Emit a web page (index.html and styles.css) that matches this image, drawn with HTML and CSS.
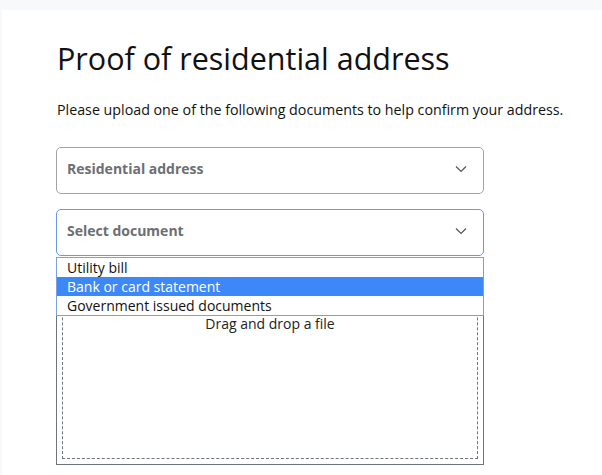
FILE: index.html
```html
<!DOCTYPE html>
<html>
<head>
<meta charset="utf-8">
<link rel="stylesheet" href="styles.css">
</head>
<body>
<div class="topbar"></div>
<main class="panel">
  <h1 class="title">Proof of residential address</h1>
  <p class="intro">Please upload one of the following documents to help confirm your address.</p>
  <div class="select">
    <span class="select-label">Residential address</span>
    <svg class="chev" width="12" height="8" viewBox="0 0 12 8"><path d="M1 1.5 L6 6.5 L11 1.5" fill="none" stroke="#555" stroke-width="1.2"/></svg>
  </div>
  <div class="select select-focus">
    <span class="select-label">Select document</span>
    <svg class="chev" width="12" height="8" viewBox="0 0 12 8"><path d="M1 1.5 L6 6.5 L11 1.5" fill="none" stroke="#555" stroke-width="1.2"/></svg>
  </div>
  <div class="drop-wrap">
    <ul class="options">
      <li class="option">Utility bill</li>
      <li class="option option-active">Bank or card statement</li>
      <li class="option">Government issued documents</li>
    </ul>
    <div class="dropzone">
      <div class="dropzone-inner">Drag and drop a file</div>
    </div>
  </div>
</main>
</body>
</html>
```
FILE: styles.css
```css
html, body {
  margin: 0;
  padding: 0;
  background: #f8f9fa;
  font-family: "Open Sans", "Noto Sans", sans-serif;
  color: #111;
}
.topbar {
  height: 10px;
}
.panel {
  margin-left: 2px;
  background: #fff;
  min-height: 465px;
  padding: 26px 0 0 54px;
  box-sizing: border-box;
}
.title {
  margin: 0;
  padding-left: 1px;
  font-weight: 400;
  font-size: 30.5px;
  line-height: 44px;
}
.intro {
  margin: 20px 0 0 0;
  padding-left: 1px;
  font-size: 14.25px;
  line-height: 20px;
}
.select {
  width: 428px;
  height: 47px;
  box-sizing: border-box;
  border: 1px solid #a3a3a3;
  border-radius: 5px;
  display: flex;
  align-items: center;
  justify-content: space-between;
  padding: 0 16px 4px 10px;
  margin-top: 27px;
}
.select + .select {
  margin-top: 15px;
}
.select-focus {
  border-color: #6699ee;
}
.select-label {
  font-weight: 700;
  font-size: 14px;
  color: #6c6f73;
}
.drop-wrap {
  position: relative;
  width: 428px;
  margin-top: 1px;
}
.options {
  position: absolute;
  top: 0;
  left: 0;
  right: 0;
  margin: 0;
  padding: 0;
  list-style: none;
  background: #fff;
  border: 1px solid #7c9fe0;
  z-index: 2;
}
.option {
  font-size: 14px;
  line-height: 19px;
  padding-left: 10px;
  color: #111;
}
.option-active {
  background: #3d88f9;
  color: #fff;
}
.dropzone {
  height: 208px;
  box-sizing: border-box;
  border: 1px solid #6c757d;
  padding: 5px;
}
.dropzone-inner {
  height: 100%;
  box-sizing: border-box;
  border: 1px dashed #6c757d;
  text-align: center;
  font-size: 14px;
  padding-top: 50px;
  color: #222;
}
```
